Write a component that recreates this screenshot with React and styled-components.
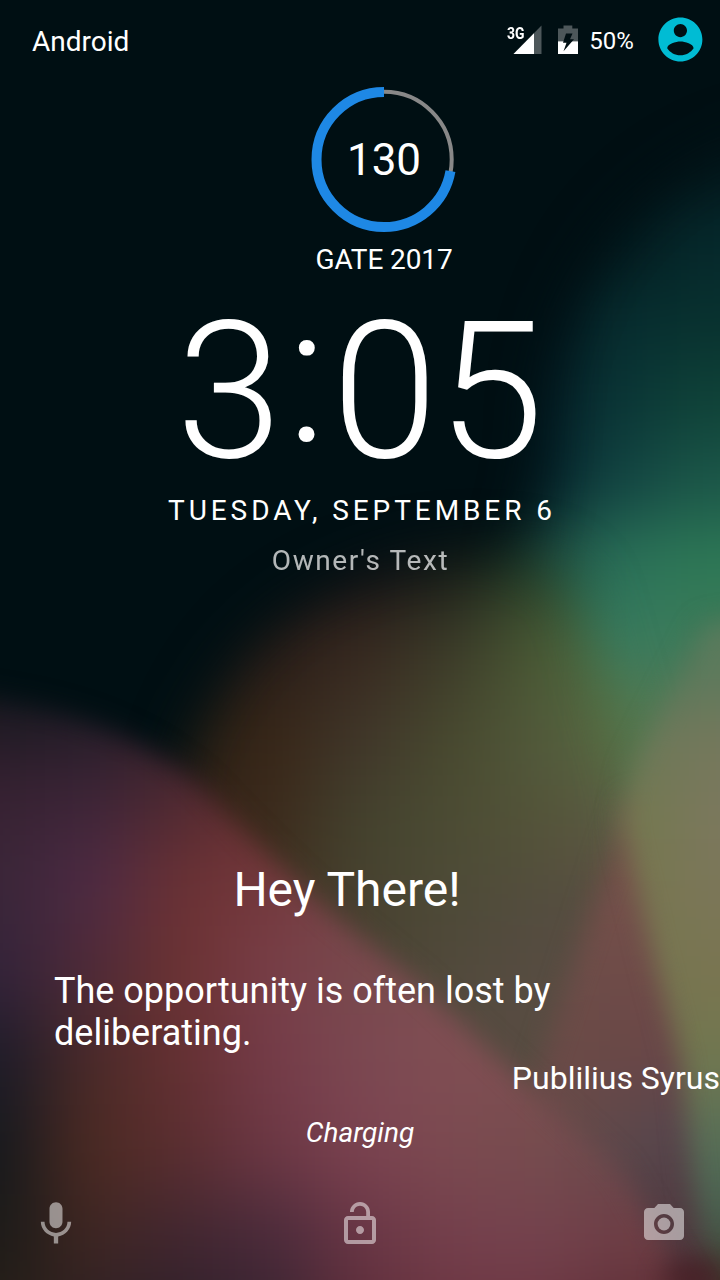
import React from "react";
import styled, { createGlobalStyle } from "styled-components";

const GlobalStyle = createGlobalStyle`
  * { box-sizing: border-box; }
  body { margin: 0; background: #000f13; }
`;

const Screen = styled.main`
  position: relative;
  isolation: isolate;
  display: flex;
  flex-direction: column;
  width: 720px;
  height: 1280px;
  overflow: hidden;
  background: #000f13;
  color: #fff;
  font-family: Roboto, "Liberation Sans", sans-serif;
`;

const WallpaperArt = styled.svg`
  position: absolute;
  inset: 0;
  z-index: -1;
  width: 100%;
  height: 100%;
`;

const StatusBar = styled.header`
  display: flex;
  align-items: center;
  height: 80px;
  padding: 2px 17px 0 32px;
`;

const Carrier = styled.span`
  flex: 1;
  padding-top: 1px;
  font-size: 28px;
  line-height: 32px;
`;

const Signal = styled.div`
  position: relative;
  width: 36px;
  height: 30px;
  margin: -2px 16px 0 0;
`;

const SignalIcon = styled.svg`
  display: block;
  width: 36px;
  height: 30px;
`;

const NetworkType = styled.span`
  position: absolute;
  left: 1px;
  top: -1px;
  font-size: 17px;
  font-weight: 700;
  line-height: 18px;
  transform: scaleX(0.82);
  transform-origin: left;
`;

const BatteryIcon = styled.svg`
  width: 20px;
  height: 30px;
  margin-top: -2px;
`;

const BatteryLevel = styled.span`
  width: 44px;
  margin: 0 19px 0 11px;
  font-size: 24px;
  line-height: 28px;
  white-space: nowrap;
`;

const Avatar = styled.svg`
  width: 52.8px;
  height: 52.8px;
  margin: -3px -4px 0 2px;
  fill: #00bcd4;
`;

const Countdown = styled.section`
  display: flex;
  flex-direction: column;
  align-items: center;
  height: 200px;
  padding: 7px 0 0 48px;
`;

const Ring = styled.div`
  display: grid;
  width: 146px;
  height: 146px;
  place-items: center;
  > * { grid-area: 1 / 1; }
`;

const RingArt = styled.svg`
  width: 146px;
  height: 146px;
  fill: none;
`;

const DaysLeft = styled.span`
  font-size: 44px;
  line-height: 52px;
`;

const CountdownLabel = styled.span`
  margin-top: 10px;
  font-size: 28px;
  line-height: 34px;
  letter-spacing: -0.1px;
`;

const Clock = styled.time`
  display: flex;
  justify-content: center;
  height: 192px;
  margin-top: 16px;
  font-size: 191px;
  font-weight: 300;
  line-height: 192px;
`;

const ClockColon = styled.span`
  margin: -16px 5px 0 4.5px;
`;

const DateLine = styled.p`
  margin: 6px 0 0;
  padding-left: 4px;
  font-size: 28px;
  line-height: 34px;
  letter-spacing: 3.92px;
  text-align: center;
`;

const OwnerLine = styled.p`
  margin: 16px 0 0;
  padding-left: 1px;
  font-size: 28px;
  line-height: 34px;
  letter-spacing: 1.6px;
  text-align: center;
  opacity: 0.7;
`;

const Quote = styled.section`
  display: flex;
  flex-direction: column;
  margin-top: 282px;
`;

const Greeting = styled.h1`
  margin: 0;
  padding-right: 26px;
  font-size: 48px;
  font-weight: 400;
  line-height: 60px;
  text-align: center;
`;

const QuoteText = styled.p`
  width: 560px;
  margin: 50px 0 0 54px;
  font-size: 36px;
  line-height: 42px;
`;

const QuoteAuthor = styled.p`
  align-self: flex-end;
  margin: 5px 0 0;
  font-size: 32px;
  line-height: 38px;
`;

const ChargeState = styled.p`
  margin: 19px 0 0;
  font-size: 28px;
  font-style: italic;
  line-height: 34px;
  text-align: center;
`;

const ShortcutBar = styled.footer`
  display: flex;
  justify-content: space-between;
  align-items: center;
  height: 56px;
  margin-top: auto;
  margin-bottom: 28px;
  padding: 0 32px;
`;

const ShortcutIcon = styled.svg`
  width: ${(p) => p.$size}px;
  height: ${(p) => p.$size}px;
  margin: 0 ${(p) => (48 - p.$size) / 2}px;
  fill: #fff;
  opacity: 0.5;
`;

/* A colour mesh: equal cells blurred into one another. The border cells
   reach outwards so that the blur never thins out at the rim. */
function Mesh({ x, y, cell, rows, mask }) {
  const reach = 120;
  return (
    <g mask={mask}>
      <g filter={cell > 85 ? "url(#melt-wide)" : "url(#melt)"}>
        {rows.map((row, r) => {
          const colors = row.split(" ");
          return colors.map((color, c) => {
            const left = c === 0 ? reach : 0;
            const right = c === colors.length - 1 ? reach : 0;
            const top = r === 0 ? reach : 0;
            const bottom = r === rows.length - 1 ? reach : 0;
            return (
              <rect
                key={`${r}-${c}`}
                x={x + (c - 0.5) * cell - left}
                y={y + (r - 0.5) * cell - top}
                width={cell + left + right}
                height={cell + top + bottom}
                fill={`#${color}`}
              />
            );
          });
        })}
      </g>
    </g>
  );
}

const TEAL = [
  "000f13 010f14 02161a",
  "000f13 021a1e 05282b",
  "02181e 062c2f 08312f",
  "032028 0a3536 0f4238",
  "04262e 124442 1b5648",
  "1c4a40 2a7058 2d7856",
  "2f6a4a 387c60 3d7a58",
  "50703e 527a50 5a7858",
];

const OLIVE = [
  "08110f 0c1213 141315 181c17 264028 2e7055",
  "141614 281d18 38281f 3c3b29 4a5a34 4d7048",
  "241e14 382617 40362a 48492f 525a3b 586c42",
  "38241a 3c2a1c 44432e 4c4c34 545339 5d5945",
  "40301e 443524 484030 4e4a38 544c40 5a4c42",
  "40301e 443524 4c4438 544a3e 584c42 5c4c44",
];

const ROSE = [
  "735248 735248",
  "735049 75504c",
  "6c4c48 704a48",
  "6a4a46 684648",
  "644a4a 56464c",
  "60444a 503a40",
];

const TAN = [
  "52785a 5a7a5c",
  "6c7858 75785c",
  "747850 7c785e",
  "787650 7b7658",
  "747650 7a7550",
  "70704e 707850",
  "5f6050 567058",
  "50504a 47604f",
  "402826 3c2c20",
];

const PLUM = [
  "17181f 1c1a23 221b24 50282a 6d4040 6d4040 6d4040 6d4040",
  "362131 3b2436 4c2830 683030 6d4040 704446 704446 704446",
  "3a2638 4d2a44 6a3134 74383c 75464a 75484a 784c4c 784c4c",
  "33233a 4f2a38 6c3232 783e48 78494c 7c4e50 7c4e50 744c4c",
  "1c1b28 4a2a28 653032 743b48 7c4852 804e54 7c4e50 6c4a4a",
  "15191c 4c2a22 5a2e30 6c3744 7b4250 7b4a50 764c4e 684a4c",
  "1c1b18 3e2622 402630 482a3a 683544 743f4c 74424e 6e3d44",
  "2a2018 2e2024 2c1e28 38222f 5c2c38 6b3440 6b3440 5a2c34",
];

function Wallpaper() {
  const whole = { x: -300, y: -300, width: 1400, height: 2000, filterUnits: "userSpaceOnUse", colorInterpolationFilters: "sRGB" };
  const maskBox = { x: -300, y: -300, width: 1400, height: 2000, maskUnits: "userSpaceOnUse" };
  return (
    <WallpaperArt viewBox="0 0 720 1280" aria-hidden="true">
      <defs>
        <filter id="melt" {...whole}><feGaussianBlur stdDeviation="32" /></filter>
        <filter id="melt-wide" {...whole}><feGaussianBlur stdDeviation="37" /></filter>
        <filter id="edge" {...whole}><feGaussianBlur stdDeviation="13" /></filter>
        <filter id="edge-soft" {...whole}><feGaussianBlur stdDeviation="27" /></filter>
        <mask id="teal" {...maskBox}>
          <path d="M820 130A290 290 0 0 0 548 420Q545 500 520 560V900H900V130Z" fill="#fff" filter="url(#edge-soft)" />
        </mask>
        <mask id="olive" {...maskBox}>
          <path d="M180 1000V770C215 655 300 575 435 555Q545 542 580 590L640 800V1300H500Z" fill="#fff" filter="url(#edge-soft)" />
        </mask>
        <mask id="rose" {...maskBox}>
          <path d="M628 800L530 1100L560 1340H850V800Z" fill="#fff" filter="url(#edge)" />
        </mask>
        <mask id="tan" {...maskBox}>
          <path d="M705 625L632 770L622 820L652 950L680 1060L692 1180L715 1340H900V600Z" fill="#fff" filter="url(#edge)" />
        </mask>
        <mask id="plum" {...maskBox}>
          <path d="M-200 690C60 680 150 742 200 785Q260 850 330 912L420 985L520 1078L620 1170L720 1340H-200Z" fill="#fff" filter="url(#edge)" />
        </mask>
      </defs>
      <Mesh x={540} y={160} cell={80} rows={TEAL} mask="url(#teal)" />
      <Mesh x={180} y={560} cell={90} rows={OLIVE} mask="url(#olive)" />
      <Mesh x={580} y={820} cell={80} rows={ROSE} mask="url(#rose)" />
      <Mesh x={640} y={660} cell={80} rows={TAN} mask="url(#tan)" />
      <Mesh x={0} y={700} cell={90} rows={PLUM} mask="url(#plum)" />
      <ellipse cx="692" cy="1278" rx="30" ry="22" fill="#451e24" opacity="0.85" filter="url(#edge)" />
    </WallpaperArt>
  );
}

const RADIUS = 67.5;
const CIRCUMFERENCE = 2 * Math.PI * RADIUS;

function CountdownRing({ days, progress }) {
  return (
    <Ring>
      <RingArt viewBox="0 0 146 146">
        <circle cx="73" cy="72.5" r="67.7" stroke="#888" strokeWidth="4" />
        <circle
          cx="73"
          cy="73"
          r={RADIUS}
          stroke="#1e88e5"
          strokeWidth="10"
          strokeDasharray={`${CIRCUMFERENCE * progress} ${CIRCUMFERENCE}`}
          transform="translate(0 -0.5) rotate(-90 73 73) translate(0 146) scale(1 -1)"
        />
      </RingArt>
      <DaysLeft>{days}</DaysLeft>
    </Ring>
  );
}

export default function App() {
  return (
    <>
      <GlobalStyle />
      <Screen>
        <Wallpaper />
        <StatusBar>
          <Carrier>Android</Carrier>
          <Signal>
            <SignalIcon viewBox="0 0 36 30">
              <path d="M35.5 0.5V29H7.5Z" fill="#4d575a" />
              <path d="M28 8.2V29H7.5Z" fill="#fff" />
            </SignalIcon>
            <NetworkType>3G</NetworkType>
          </Signal>
          <BatteryIcon viewBox="0 0 20 30">
            <path d="M5.5 0.5H14.3V3.5H20V29H0V3.5H5.5Z" fill="#4d575a" />
            <path d="M0 16.4H20V29H0Z" fill="#fff" />
            <path d="M8 8.5H14.5L12 14.3H16L5.5 26.3L8.5 17.7H5Z" fill="#000f13" />
          </BatteryIcon>
          <BatteryLevel>50%</BatteryLevel>
          <Avatar viewBox="0 0 24 24">
            <path d="M12 2C6.48 2 2 6.48 2 12s4.48 10 10 10 10-4.48 10-10S17.52 2 12 2zm0 3c1.66 0 3 1.34 3 3s-1.34 3-3 3-3-1.34-3-3 1.34-3 3-3zm0 14.2c-2.5 0-4.71-1.28-6-3.22.03-1.99 4-3.08 6-3.08 1.99 0 5.97 1.09 6 3.08-1.29 1.94-3.5 3.22-6 3.22z" />
          </Avatar>
        </StatusBar>

        <Countdown>
          <CountdownRing days={130} progress={0.721} />
          <CountdownLabel>GATE 2017</CountdownLabel>
        </Countdown>

        <Clock>
          <span>3</span>
          <ClockColon>:</ClockColon>
          <span>05</span>
        </Clock>
        <DateLine>TUESDAY, SEPTEMBER 6</DateLine>
        <OwnerLine>Owner's Text</OwnerLine>

        <Quote>
          <Greeting>Hey There!</Greeting>
          <QuoteText>The opportunity is often lost by deliberating.</QuoteText>
          <QuoteAuthor>Publilius Syrus</QuoteAuthor>
        </Quote>
        <ChargeState>Charging</ChargeState>

        <ShortcutBar>
          <ShortcutIcon $size={52} viewBox="0 0 24 24">
            <path d="M12 14c1.66 0 2.99-1.34 2.99-3L15 5c0-1.66-1.34-3-3-3S9 3.34 9 5v6c0 1.66 1.34 3 3 3zm5.3-3c0 3-2.54 5.1-5.3 5.1S6.7 14 6.7 11H5c0 3.41 2.72 6.23 6 6.72V21h2v-3.28c3.28-.48 6-3.3 6-6.72h-1.7z" />
          </ShortcutIcon>
          <ShortcutIcon $size={48} viewBox="0 0 24 24">
            <path d="M12 17c1.1 0 2-.9 2-2s-.9-2-2-2-2 .9-2 2 .9 2 2 2zm6-9h-1V6c0-2.76-2.24-5-5-5S7 3.24 7 6h1.9c0-1.71 1.39-3.1 3.1-3.1 1.71 0 3.1 1.39 3.1 3.1v2H6c-1.1 0-2 .9-2 2v10c0 1.1.9 2 2 2h12c1.1 0 2-.9 2-2V10c0-1.1-.9-2-2-2zm0 12H6V10h12v10z" />
          </ShortcutIcon>
          <ShortcutIcon $size={48} viewBox="0 0 24 24">
            <circle cx="12" cy="12" r="3.2" />
            <path d="M9 2L7.17 4H4c-1.1 0-2 .9-2 2v12c0 1.1.9 2 2 2h16c1.1 0 2-.9 2-2V6c0-1.1-.9-2-2-2h-3.17L15 2H9zm3 15c-2.76 0-5-2.24-5-5s2.24-5 5-5 5 2.24 5 5-2.24 5-5 5z" />
          </ShortcutIcon>
        </ShortcutBar>
      </Screen>
    </>
  );
}
